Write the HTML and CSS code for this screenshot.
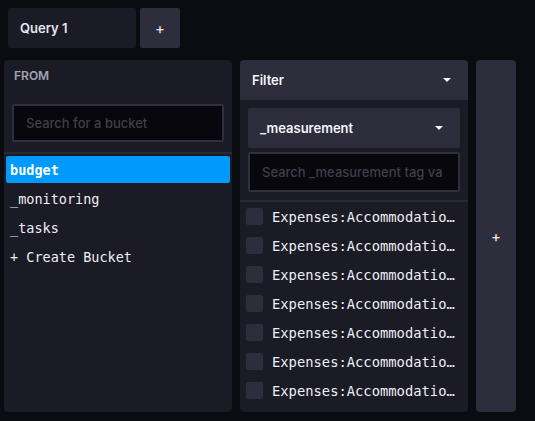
FILE: index.html
```html
<!DOCTYPE html>
<html>
<head>
<meta charset="utf-8">
<link rel="stylesheet" href="styles.css">
</head>
<body>
<div class="tabs">
  <div class="tab">Query 1</div>
  <div class="tab-add">+</div>
</div>
<div class="panels">
  <div class="panel from">
    <div class="from-head">FROM</div>
    <div class="from-search">
      <div class="input">Search for a bucket</div>
    </div>
    <div class="bucket-list">
      <div class="bucket selected">budget</div>
      <div class="bucket">_monitoring</div>
      <div class="bucket">_tasks</div>
      <div class="bucket">+ Create Bucket</div>
    </div>
  </div>
  <div class="panel filter">
    <div class="filter-head"><span>Filter</span><span class="caret"></span></div>
    <div class="filter-controls">
      <div class="dropdown"><span>_measurement</span><span class="caret"></span></div>
      <div class="input tag-input">Search _measurement tag va</div>
    </div>
    <div class="tag-list">
      <div class="tag"><span class="check"></span><span class="tag-text">Expenses:Accommodatio…</span></div>
      <div class="tag"><span class="check"></span><span class="tag-text">Expenses:Accommodatio…</span></div>
      <div class="tag"><span class="check"></span><span class="tag-text">Expenses:Accommodatio…</span></div>
      <div class="tag"><span class="check"></span><span class="tag-text">Expenses:Accommodatio…</span></div>
      <div class="tag"><span class="check"></span><span class="tag-text">Expenses:Accommodatio…</span></div>
      <div class="tag"><span class="check"></span><span class="tag-text">Expenses:Accommodatio…</span></div>
      <div class="tag"><span class="check"></span><span class="tag-text">Expenses:Accommodatio…</span></div>
    </div>
  </div>
  <div class="panel add-panel">+</div>
</div>
</body>
</html>
```

FILE: styles.css
```css
* { box-sizing: border-box; }
html, body { margin: 0; padding: 0; }
body {
  background: #0b0b12;
  width: 535px;
  height: 421px;
  overflow: hidden;
  font-family: Inter, "Noto Sans", sans-serif;
  color: #eeeef4;
}
.tabs {
  display: flex;
  gap: 4px;
  padding: 8px 0 0 8px;
  height: 60px;
}
.tab {
  width: 128px;
  height: 40px;
  background: #1b1b25;
  border-radius: 2px;
  padding-left: 12px;
  display: flex;
  align-items: center;
  font-size: 13px;
  font-weight: 600;
  color: #e6e6ee;
}
.tab-add {
  width: 40px;
  height: 40px;
  background: #2d2d3b;
  border-radius: 2px;
  display: flex;
  align-items: center;
  justify-content: center;
  font-size: 15px;
  color: #e6e6ee;
}
.panels {
  display: flex;
  gap: 8px;
  padding-left: 4px;
}
.panel {
  height: 352px;
  border-radius: 4px;
  background: #1b1b25;
}
.from { width: 228px; }
.from-head {
  height: 30px;
  padding-left: 10px;
  display: flex;
  align-items: center;
  padding-top: 1px;
  font-size: 12px;
  font-weight: 600;
  color: #a3a3b3;
}
.from-search {
  padding: 14px 8px 10px;
  border-bottom: 2px solid #2a2a36;
}
.input {
  height: 38px;
  background: #07070d;
  border: 2px solid #2f2f3d;
  border-radius: 2px;
  display: flex;
  align-items: center;
  padding-left: 12px;
  font-size: 13px;
  font-weight: 500;
  color: #3f3f4c;
  white-space: nowrap;
  overflow: hidden;
}
.bucket-list { padding: 2px; }
.bucket {
  height: 27px;
  margin-bottom: 2px;
  display: flex;
  align-items: center;
  padding-left: 4px;
  font-family: "DejaVu Sans Mono", monospace;
  font-size: 13.5px;
  color: #eeeef4;
  border-radius: 2px;
}
.bucket.selected {
  background: #009afc;
  color: #fff;
  font-weight: bold;
}
.filter { width: 228px; }
.filter-head {
  height: 40px;
  background: #2d2d3b;
  border-radius: 4px 4px 0 0;
  display: flex;
  align-items: center;
  justify-content: space-between;
  padding: 0 17px 0 12px;
  font-size: 13px;
  font-weight: 600;
  color: #f4f4f8;
}
.caret {
  width: 0;
  height: 0;
  border-left: 4px solid transparent;
  border-right: 4px solid transparent;
  border-top: 4px solid #f4f4f8;
}
.filter-controls {
  padding: 8px 8px 8px;
  border-bottom: 2px solid #2a2a36;
  display: flex;
  flex-direction: column;
  gap: 4px;
}
.dropdown {
  height: 40px;
  background: #2d2d3b;
  border-radius: 2px;
  display: flex;
  align-items: center;
  justify-content: space-between;
  padding: 0 17px 0 12px;
  font-size: 13px;
  font-weight: 600;
  color: #f4f4f8;
}
.tag-input { height: 40px; padding-left: 12px; }
.tag-list { padding-left: 6px; }
.tag {
  height: 29px;
  display: flex;
  align-items: center;
  gap: 9px;
}
.check {
  flex: none;
  width: 17px;
  height: 17px;
  background: #2d2d3b;
  border-radius: 2px;
}
.tag-text {
  font-family: "DejaVu Sans Mono", monospace;
  font-size: 13.8px;
  color: #eeeef4;
  white-space: nowrap;
}
.add-panel {
  width: 40px;
  background: #2d2d3b;
  display: flex;
  align-items: center;
  justify-content: center;
  font-size: 15px;
  color: #eeeef4;
}
```
